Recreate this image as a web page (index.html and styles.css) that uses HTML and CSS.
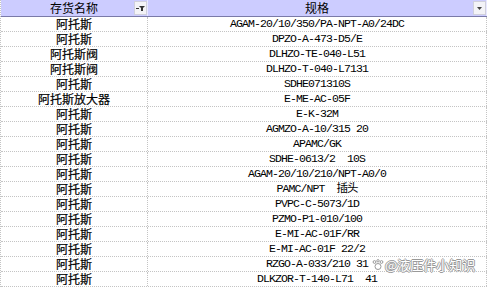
FILE: index.html
```html
<!DOCTYPE html>
<html lang="zh">
<head>
<meta charset="utf-8">
<link rel="stylesheet" href="styles.css">
</head>
<body>
<div class="sheet">
  <div class="row head">
    <div class="cell c1">存货名称<span class="fbtn"><svg width="11" height="10" viewBox="0 0 11 10"><rect x="1" y="5" width="3" height="1" fill="#333"/><path d="M4 3h6l-2 2v3h-2v-3z" fill="#333"/></svg></span></div>
    <div class="cell c2">规格<span class="fbtn"><svg width="11" height="10" viewBox="0 0 11 10"><path d="M3 4h5l-2.5 3z" fill="#444"/></svg></span></div>
  </div>
  <div class="row"><div class="cell c1">阿托斯</div><div class="cell c2">AGAM-20/10/350/PA-NPT-A0/24DC</div></div>
  <div class="row"><div class="cell c1">阿托斯</div><div class="cell c2">DPZO-A-473-D5/E</div></div>
  <div class="row"><div class="cell c1">阿托斯阀</div><div class="cell c2">DLHZO-TE-040-L51</div></div>
  <div class="row"><div class="cell c1">阿托斯阀</div><div class="cell c2">DLHZO-T-040-L7131</div></div>
  <div class="row"><div class="cell c1">阿托斯</div><div class="cell c2">SDHE071310S</div></div>
  <div class="row"><div class="cell c1">阿托斯放大器</div><div class="cell c2">E-ME-AC-05F</div></div>
  <div class="row"><div class="cell c1">阿托斯</div><div class="cell c2">E-K-32M</div></div>
  <div class="row"><div class="cell c1">阿托斯</div><div class="cell c2">AGMZO-A-10/315 20</div></div>
  <div class="row"><div class="cell c1">阿托斯</div><div class="cell c2">APAMC/GK</div></div>
  <div class="row"><div class="cell c1">阿托斯</div><div class="cell c2">SDHE-0613/2  10S</div></div>
  <div class="row"><div class="cell c1">阿托斯</div><div class="cell c2">AGAM-20/10/210/NPT-A0/0</div></div>
  <div class="row"><div class="cell c1">阿托斯</div><div class="cell c2">PAMC/NPT  插头</div></div>
  <div class="row"><div class="cell c1">阿托斯</div><div class="cell c2">PVPC-C-5073/1D</div></div>
  <div class="row"><div class="cell c1">阿托斯</div><div class="cell c2">PZMO-P1-010/100</div></div>
  <div class="row"><div class="cell c1">阿托斯</div><div class="cell c2">E-MI-AC-01F/RR</div></div>
  <div class="row"><div class="cell c1">阿托斯</div><div class="cell c2">E-MI-AC-01F 22/2</div></div>
  <div class="row"><div class="cell c1">阿托斯</div><div class="cell c2">RZGO-A-033/210 31</div></div>
  <div class="row"><div class="cell c1">阿托斯</div><div class="cell c2">DLKZOR-T-140-L71  41</div></div>
</div>
<div class="wm"><svg class="wm-icon" width="12" height="12" viewBox="0 0 12 12"><g fill="#fff" stroke="#999" stroke-width="1"><circle cx="6" cy="7.5" r="3"/><circle cx="2.5" cy="3" r="1.4"/><circle cx="6" cy="1.8" r="1.2"/><circle cx="9.5" cy="3" r="1.4"/></g></svg><span>@液压件小知识</span></div>
</body>
</html>
```
FILE: styles.css
```css
html, body {
  margin: 0;
  padding: 0;
  background: #fff;
}
body {
  width: 489px;
  height: 288px;
  overflow: hidden;
  position: relative;
}
.sheet {
  width: 487px;
  border-left: 1px dotted #c4c4c4;
  box-sizing: border-box;
  font-family: "Noto Sans CJK SC", sans-serif;
  font-size: 12px;
  color: #000;
}
.row {
  display: grid;
  grid-template-columns: 147px 339px;
  height: 15px;
  border-bottom: 1px dotted #c4c4c4;
  box-sizing: border-box;
}
.cell {
  text-align: center;
  line-height: 14px;
  white-space: pre;
  border-right: 1px dotted #c4c4c4;
  box-sizing: border-box;
}
.c1 {
  -webkit-text-stroke: 0.2px #000;
}
.c2 {
  font-family: "Liberation Mono", "Noto Sans CJK SC", monospace;
  font-size: 11.5px;
  letter-spacing: -0.9px;
}
.head {
  height: 17px;
  background: #ccccff;
  border-bottom: 1px solid #7a7aa8;
}
.head .cell {
  position: relative;
  line-height: 16px;
  font-family: "Noto Sans CJK SC", sans-serif;
  font-size: 12px;
  letter-spacing: 0;
  -webkit-text-stroke: 0;
  border-right: 1px solid #e8e8ff;
}
.fbtn {
  position: absolute;
  top: 1px;
  right: 0;
  width: 13px;
  height: 14px;
  box-sizing: border-box;
  background: #f3f3f7;
  border: 1px solid #d0d0dc;
  display: flex;
  align-items: center;
  justify-content: center;
}
.wm {
  position: absolute;
  left: 372px;
  top: 257px;
  display: flex;
  align-items: center;
  gap: 1px;
  font-family: "Noto Sans CJK SC", sans-serif;
  font-size: 13px;
  line-height: 16px;
  color: #fff;
  text-shadow: 1px 0 0 #999, -1px 0 0 #999, 0 1px 0 #999, 0 -1px 0 #999;
}
.wm-icon {
  display: block;
}
```
